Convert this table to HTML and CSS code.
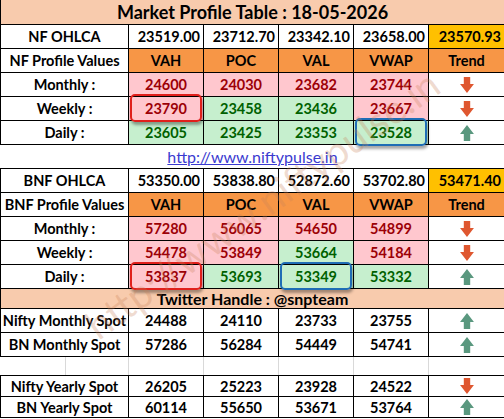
FILE: index.html
```html
<!DOCTYPE html>
<html lang="en">
<head>
<meta charset="UTF-8">
<meta name="viewport" content="width=device-width, initial-scale=1.0">
<title>Market Profile Table</title>
<link rel="stylesheet" href="styles.css">
</head>
<body>
<div class="sheet">
<table class="mp">
    <colgroup>
        <col class="c-label">
        <col class="c-val"><col class="c-val"><col class="c-val"><col class="c-val">
        <col class="c-trend">
    </colgroup>

    <tr class="title-row"><td colspan="6">Market Profile Table : 18-05-2026</td></tr>

    <!-- Nifty -->
    <tr class="ohlca-row">
        <th>NF OHLCA</th>
        <td>23519.00</td><td>23712.70</td><td>23342.10</td><td>23658.00</td>
        <td class="avg">23570.93</td>
    </tr>
    <tr class="head-row">
        <th>NF Profile Values</th>
        <td>VAH</td><td>POC</td><td>VAL</td><td>VWAP</td><td>Trend</td>
    </tr>
    <tr>
        <th>Monthly :</th>
        <td class="neg">24600</td><td class="neg">24030</td><td class="neg">23682</td><td class="neg">23744</td>
        <td class="trend"><svg class="arrow down" viewBox="0 0 13 15"><polygon points="3.5,0 9.5,0 9.5,6.5 13,6.5 6.5,15 0,6.5 3.5,6.5"/></svg></td>
    </tr>
    <tr>
        <th>Weekly :</th>
        <td class="neg mark"><span class="box red"></span>23790</td><td class="pos">23458</td><td class="pos">23436</td><td class="neg">23667</td>
        <td class="trend"><svg class="arrow down" viewBox="0 0 13 15"><polygon points="3.5,0 9.5,0 9.5,6.5 13,6.5 6.5,15 0,6.5 3.5,6.5"/></svg></td>
    </tr>
    <tr>
        <th>Daily :</th>
        <td class="pos">23605</td><td class="pos">23425</td><td class="pos">23353</td><td class="pos mark"><span class="box blue"></span>23528</td>
        <td class="trend"><svg class="arrow up" viewBox="0 0 13 15"><polygon points="3.5,15 9.5,15 9.5,8.5 13,8.5 6.5,0 0,8.5 3.5,8.5"/></svg></td>
    </tr>

    <tr class="link-row"><td colspan="6"><a href="#">http://www.niftypulse.in</a></td></tr>

    <!-- Bank Nifty -->
    <tr class="ohlca-row">
        <th>BNF OHLCA</th>
        <td>53350.00</td><td>53838.80</td><td>52872.60</td><td>53702.80</td>
        <td class="avg">53471.40</td>
    </tr>
    <tr class="head-row">
        <th>BNF Profile Values</th>
        <td>VAH</td><td>POC</td><td>VAL</td><td>VWAP</td><td>Trend</td>
    </tr>
    <tr>
        <th>Monthly :</th>
        <td class="neg">57280</td><td class="neg">56065</td><td class="neg">54650</td><td class="neg">54899</td>
        <td class="trend"><svg class="arrow down" viewBox="0 0 13 15"><polygon points="3.5,0 9.5,0 9.5,6.5 13,6.5 6.5,15 0,6.5 3.5,6.5"/></svg></td>
    </tr>
    <tr>
        <th>Weekly :</th>
        <td class="neg">54478</td><td class="neg">53849</td><td class="pos">53664</td><td class="neg">54184</td>
        <td class="trend"><svg class="arrow down" viewBox="0 0 13 15"><polygon points="3.5,0 9.5,0 9.5,6.5 13,6.5 6.5,15 0,6.5 3.5,6.5"/></svg></td>
    </tr>
    <tr>
        <th>Daily :</th>
        <td class="neg mark"><span class="box red"></span>53837</td><td class="pos">53693</td><td class="pos mark"><span class="box blue"></span>53349</td><td class="pos">53332</td>
        <td class="trend"><svg class="arrow up" viewBox="0 0 13 15"><polygon points="3.5,15 9.5,15 9.5,8.5 13,8.5 6.5,0 0,8.5 3.5,8.5"/></svg></td>
    </tr>

    <tr class="twitter-row"><td colspan="6">Twitter Handle : @snpteam</td></tr>

    <!-- Spot levels -->
    <tr class="spot-row">
        <th>Nifty Monthly Spot</th>
        <td>24488</td><td>24110</td><td>23733</td><td>23755</td>
        <td class="trend"><svg class="arrow up" viewBox="0 0 13 15"><polygon points="3.5,15 9.5,15 9.5,8.5 13,8.5 6.5,0 0,8.5 3.5,8.5"/></svg></td>
    </tr>
    <tr class="spot-row">
        <th>BN Monthly Spot</th>
        <td>57286</td><td>56284</td><td>54449</td><td>54741</td>
        <td class="trend"><svg class="arrow up" viewBox="0 0 13 15"><polygon points="3.5,15 9.5,15 9.5,8.5 13,8.5 6.5,0 0,8.5 3.5,8.5"/></svg></td>
    </tr>
    <tr class="gap-row">
        <td class="split"><span class="half"></span></td><td></td><td></td><td></td><td></td><td></td>
    </tr>
    <tr class="spot-row yearly">
        <th>Nifty Yearly Spot</th>
        <td>26205</td><td>25223</td><td>23928</td><td>24522</td>
        <td class="trend"><svg class="arrow down" viewBox="0 0 13 15"><polygon points="3.5,0 9.5,0 9.5,6.5 13,6.5 6.5,15 0,6.5 3.5,6.5"/></svg></td>
    </tr>
    <tr class="spot-row yearly">
        <th>BN Yearly Spot</th>
        <td>60114</td><td>55650</td><td>53671</td><td>53764</td>
        <td class="trend"><svg class="arrow up" viewBox="0 0 13 15"><polygon points="3.5,15 9.5,15 9.5,8.5 13,8.5 6.5,0 0,8.5 3.5,8.5"/></svg></td>
    </tr>
</table>

<div class="watermark">http://www.niftypulse.in</div>
</div>
</body>
</html>
```

FILE: styles.css
```css
body {
    margin: 0;
    background: #fff;
    font-family: Lato, "Open Sans", sans-serif;
}

.sheet {
    position: relative;
    width: 504px;
    overflow: hidden;
}

.mp {
    border-collapse: collapse;
    table-layout: fixed;
    width: 504px;
    font-size: 14.5px;
    font-weight: bold;
    color: #000;
}

.c-label { width: 128px; }
.c-val { width: 75px; }
.c-trend { width: 76px; }

.mp td,
.mp th {
    border: 1px solid #000;
    padding: 0 3px;
    height: 23px;
    text-align: center;
    white-space: nowrap;
    font-weight: bold;
}

.mp th {
    padding: 0 1px;
}

.title-row td {
    background: #f8cbad;
    border-top: none;
    font-size: 18px;
    height: 24px;
}

.ohlca-row td {
    text-align: right;
    background: #fff;
}

.ohlca-row td.avg {
    background: #ffc000;
}

.head-row td {
    background: #f79646;
}

.neg {
    background: #ffc7ce;
    color: #9c0006;
}

.pos {
    background: #c6efce;
    color: #006100;
}

.trend {
    background: #fff;
}

.arrow {
    display: block;
    width: 14px;
    height: 16px;
    margin: 0 auto;
}

.arrow.down polygon { fill: #df5730; }
.arrow.up polygon { fill: #5a987f; }

.link-row td {
    border-left: none;
    border-right: none;
    height: 23px;
    font-weight: normal;
}

.link-row a {
    color: #3a3ad0;
    text-decoration: underline;
    font-weight: normal;
    font-size: 16px;
}

.twitter-row td {
    background: #f8cbad;
    height: 19px;
    font-size: 16px;
}

.spot-row.yearly th,
.spot-row.yearly td {
    height: 20px;
}

.gap-row td {
    height: 18px;
    border-left: 1px solid #d9d9d9;
    border-right: 1px solid #d9d9d9;
}

.gap-row td.split {
    position: relative;
    border-left: none;
}

.gap-row .half {
    position: absolute;
    top: 0;
    bottom: 0;
    left: 64px;
    border-left: 1px solid #d9d9d9;
}

/* highlight shapes drawn over cells */
.mark {
    position: relative;
}

.box {
    position: absolute;
    top: -3px;
    bottom: -2px;
    left: 1px;
    right: 1px;
    border: 2px solid #e0201c;
    border-radius: 5px;
    box-shadow: 1px 3px 3px rgba(0,0,0,0.35);
    pointer-events: none;
}

.box.blue {
    border-color: #1f6db5;
}

.watermark {
    position: absolute;
    left: 32px;
    top: 180px;
    width: 460px;
    text-align: center;
    font-size: 40px;
    color: rgba(200, 130, 90, 0.28);
    transform: rotate(-36deg);
    pointer-events: none;
}
```
